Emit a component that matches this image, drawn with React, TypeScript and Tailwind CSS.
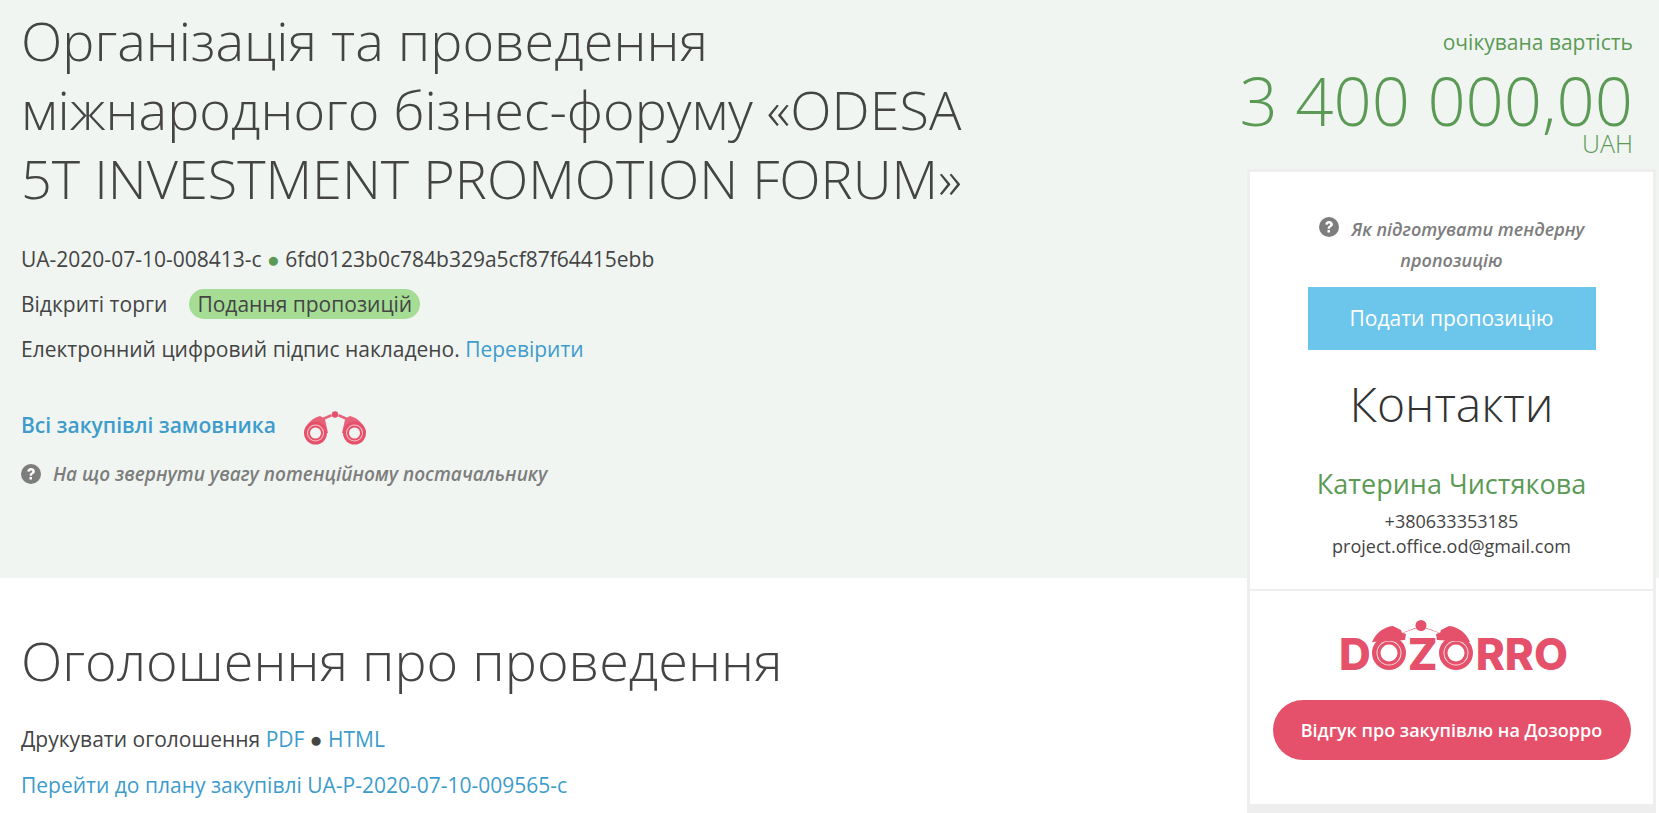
const sans = "font-['Open_Sans',sans-serif]";

function Help({ className }: { className: string }) {
  return (
    <svg viewBox="0 0 20 20" className={className} aria-hidden="true">
      <circle cx="10" cy="10" r="10" fill="#7d7d7d" />
      <path d="M6.300 7.600c.1-2.300 1.600-3.600 3.800-3.600s3.800 1.300 3.800 3.200c0 1.400-.7 2.100-1.800 2.900-.8.500-1.100.9-1.100 1.700H8.600c0-1.600.5-2.300 1.600-3.100.7-.5 1-.8 1-1.300 0-.6-.5-1-1.200-1-.8 0-1.200.5-1.300 1.300zM8.500 13h2.500v2.600H8.500z" fill="#fff" />
    </svg>
  );
}

function Binoculars({ className }: { className: string }) {
  return (
    <svg viewBox="0 0 62 34" className={className} aria-hidden="true">
      <path d="M.5 22C1.500 13 8 7 16 5l3 1.500 8-3.500 1 2.500-7 3L24 22z" fill="#e8627a" />
      <path d="M61.500 22C60.500 13 54 7 46 5l-3 1.500-8-3.500-1 2.500 7 3L38 22z" fill="#e8627a" />
      <circle cx="31" cy="3.500" r="3.200" fill="#e5516b" />
      <circle cx="11.500" cy="22" r="11.500" fill="#e5516b" />
      <circle cx="11.500" cy="22" r="8.500" fill="#f7c3cc" />
      <circle cx="11.500" cy="22" r="7.500" fill="#e5516b" />
      <circle cx="11.500" cy="22" r="5.500" fill="#f0f5f2" />
      <circle cx="50.500" cy="22" r="11.500" fill="#e5516b" />
      <circle cx="50.500" cy="22" r="8.500" fill="#f7c3cc" />
      <circle cx="50.500" cy="22" r="7.500" fill="#e5516b" />
      <circle cx="50.500" cy="22" r="5.500" fill="#f0f5f2" />
    </svg>
  );
}

function Ring() {
  return (
    <svg viewBox="0 0 34 34" className="h-[34px] w-[34px] shrink-0" aria-hidden="true">
      <circle cx="17" cy="17" r="17" fill="#e5516b" />
      <circle cx="17" cy="17" r="12.500" fill="#fbdde2" />
      <circle cx="17" cy="17" r="11.500" fill="#e5516b" />
      <circle cx="17" cy="17" r="8.500" fill="#fff" />
    </svg>
  );
}

function DozorroLogo() {
  const letter = "font-['Inter',sans-serif] font-extrabold text-[#e5516b] text-[44px] leading-[32px]";
  return (
    <div className="relative mx-auto flex h-[52px] w-[231px] items-end pl-[3px]">
      <span className={letter}>D</span>
      <span className="ml-[1px]"><Ring /></span>
      <span className={`${letter} ml-[2px]`}>Z</span>
      <span className="ml-[1px]"><Ring /></span>
      <span className={`${letter} ml-[3px]`}>RRO</span>
      <svg viewBox="0 0 100 24" className="absolute left-[35px] top-[1px] h-[24px] w-[100px]" aria-hidden="true">
        <path d="M44 9 31 14l-1-3-8-4C12 8 5 14 1 23l33-2 1-6-3-1 14-5z" fill="#e5516b" />
        <path d="M56 9l13 5 1-3 8-4c10 1 17 7 21 16l-33-2-1-6 3-1-14-5z" fill="#e5516b" />
        <circle cx="50" cy="6.500" r="5.500" fill="#e5516b" />
      </svg>
    </div>
  );
}

export default function App() {
  return (
    <div className={`${sans} flex h-[813px] w-[1659px] overflow-hidden bg-white text-[21px] text-[#444]`}>
      <main className="w-[1247px] shrink-0">
        <section className="h-[578px] bg-[#f0f5f2] pl-[21px]">
          <h1 className="w-[1000px] pt-[6px] text-[54px] font-light leading-[69px]">
            Організація та проведення<br />
            міжнародного бізнес-форуму «ODESA<br />
            5T INVESTMENT PROMOTION FORUM»
          </h1>
          <p className="mt-[32px] leading-[28px]">
            UA-2020-07-10-008413-c <span className="text-[#5b9a55]">●</span> 6fd0123b0c784b329a5cf87f64415ebb
          </p>
          <div className="mt-[16px] flex items-center leading-[28px]">
            <span>Відкриті торги</span>
            <span className="ml-[22px] rounded-full bg-[#a5dd95] px-[8px] leading-[30px]">Подання пропозицій</span>
          </div>
          <p className="mt-[16px] leading-[28px]">
            Електронний цифровий підпис накладено. <a className="text-[#3d9ccb]">Перевірити</a>
          </p>
          <div className="mt-[48px] flex items-start leading-[28px]">
            <a className="font-semibold text-[#3d9ccb]">Всі закупівлі замовника</a>
            <Binoculars className="ml-[28px] h-[34px] w-[62px]" />
          </div>
          <div className="mt-[15px] flex items-center gap-[12px] leading-[28px]">
            <Help className="h-[20px] w-[20px]" />
            <em className="text-[19px] font-semibold text-[#7d7d7d]">На що звернути увагу потенційному постачальнику</em>
          </div>
        </section>
        <section className="pl-[21px]">
          <h2 className="mt-[45px] text-[54px] font-light leading-[74px]">Оголошення про проведення</h2>
          <p className="mt-[28px] leading-[28px]">
            Друкувати оголошення <a className="text-[#3d9ccb]">PDF</a> ● <a className="text-[#3d9ccb]">HTML</a>
          </p>
          <p className="mt-[18px] leading-[28px]">
            <a className="text-[#3d9ccb]">Перейти до плану закупівлі UA-P-2020-07-10-009565-с</a>
          </p>
        </section>
      </main>

      <aside className="w-[412px] shrink-0 bg-[linear-gradient(#f0f5f2_578px,#fff_578px)]">
        <div className="flex h-[169px] flex-col items-end pr-[26px] text-[#5b9a55]">
          <div className="mt-[28px] leading-[28px]">очікувана вартість</div>
          <div className="mt-[14px] whitespace-nowrap text-[67px] font-light leading-[60px]">3 400 000,00</div>
          <div className="mt-[3px] text-[25px] font-light leading-[20px]">UAH</div>
        </div>
        <div className="mr-[3px] border-x-[3px] border-b-[9px] border-t-[3px] border-[#eeeeee] bg-[#eeeeee]">
          <div className="h-[417px] bg-white pt-[42px] text-center">
            <div className="mx-auto w-[290px] text-[18px] font-semibold italic leading-[31px] text-[#7d7d7d]">
              <Help className="mr-[13px] inline h-[20px] w-[20px] align-[-1px]" />
              Як підготувати тендерну пропозицію
            </div>
            <button className="mx-auto mt-[11px] block h-[63px] w-[288px] bg-[#6cc5eb] text-white">Подати пропозицію</button>
            <div className="mt-[23px] text-[48px] font-light leading-[62px] text-[#333]">Контакти</div>
            <div className="mt-[32px] text-[27px] leading-[33px] text-[#5b9a55]">Катерина Чистякова</div>
            <div className="mt-[9px] text-[18px] leading-[25px]">+380633353185<br />project.office.od@gmail.com</div>
          </div>
          <div className="mt-[2px] h-[213px] bg-white pt-[27px]">
            <DozorroLogo />
            <button className="mx-auto mt-[30px] block h-[60px] w-[358px] rounded-full bg-[#e5516b] text-[18px] font-semibold text-white">Відгук про закупівлю на Дозорро</button>
          </div>
        </div>
      </aside>
    </div>
  );
}
